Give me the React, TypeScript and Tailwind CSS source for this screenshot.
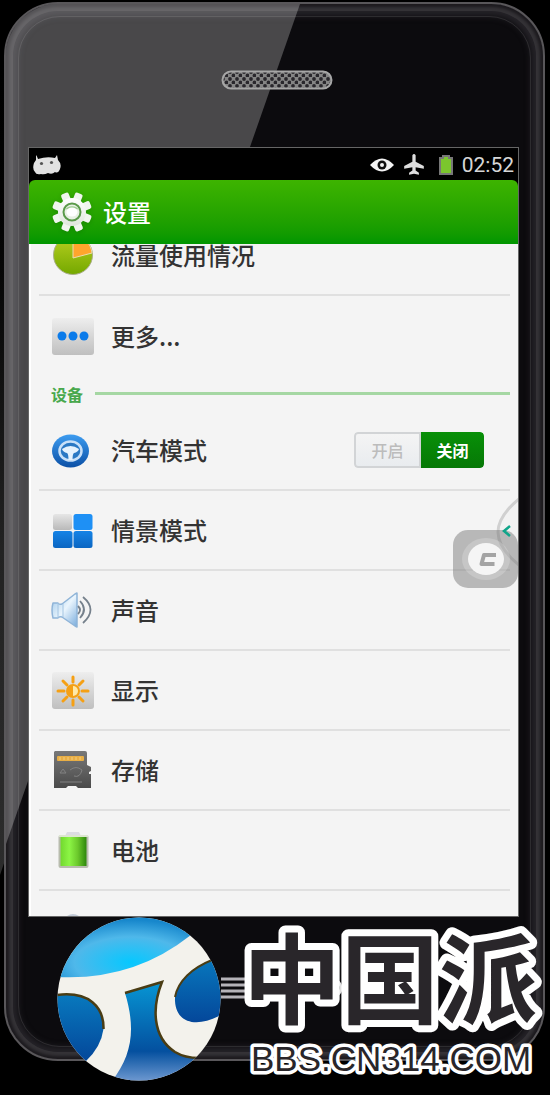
import { useState, type ReactNode } from 'react';

const svg = 'h-12 w-12 shrink-0';

function GearIcon() {
  const teeth = [0, 45, 90, 135, 180, 225, 270, 315];
  return (
    <svg viewBox="0 0 42 42" className="h-[42px] w-[42px] drop-shadow-sm" aria-hidden="true">
      <defs>
        <linearGradient id="gear" x1="0" y1="0" x2="0" y2="1">
          <stop offset="0" stopColor="#ffffff" />
          <stop offset="1" stopColor="#dfe6dc" />
        </linearGradient>
      </defs>
      <g fill="#f0f5ee" transform="rotate(22 21 21)">
        {teeth.map((a) => (
          <rect key={a} x="17" y="1" width="8" height="10" rx="2" transform={`rotate(${a} 21 21)`} />
        ))}
      </g>
      <circle cx="21" cy="21" r="14" fill="url(#gear)" />
      <circle cx="21" cy="21" r="8.500" fill="#e8f0e4" stroke="#5a9a4a" strokeWidth="2" />
      <path d="M14 19a7.500 6 0 0 1 14 0c-3-2-11-2-14 0Z" fill="#9ccb90" />
      <ellipse cx="21" cy="21" rx="5.500" ry="4.500" fill="#fff" />
    </svg>
  );
}

function PieIcon() {
  return (
    <svg viewBox="0 0 48 48" className={svg} aria-hidden="true">
      <defs>
        <linearGradient id="pie" x1="0" y1="0" x2="0" y2="1">
          <stop offset="0" stopColor="#b8d020" />
          <stop offset="1" stopColor="#74a800" />
        </linearGradient>
      </defs>
      <circle cx="24" cy="24" r="19.500" fill="url(#pie)" stroke="#a9ae8a" />
      <path d="M24 27V4a20 20 0 0 1 19 18Z" fill="#ffa52c" stroke="#e9dcae" strokeWidth="1" />
    </svg>
  );
}

function Plate({ children }: { children: ReactNode }) {
  return (
    <svg viewBox="0 0 48 48" className={svg} aria-hidden="true">
      <defs>
        <linearGradient id="plate" x1="0" y1="0" x2="0" y2="1">
          <stop offset="0" stopColor="#eeeeee" />
          <stop offset="1" stopColor="#bfbfbf" />
        </linearGradient>
      </defs>
      <rect x="3" y="6" width="42" height="37" rx="3" fill="url(#plate)" />
      {children}
    </svg>
  );
}

function MoreIcon() {
  return (
    <Plate>
      <g fill="#0b7bea">
        <circle cx="13" cy="24" r="4.500" />
        <circle cx="24" cy="24" r="4.500" />
        <circle cx="35" cy="24" r="4.500" />
      </g>
    </Plate>
  );
}

function CarIcon() {
  return (
    <svg viewBox="0 0 48 48" className={svg} aria-hidden="true">
      <defs>
        <linearGradient id="car" x1="0" y1="0" x2="0" y2="1">
          <stop offset="0" stopColor="#3d9cf0" />
          <stop offset="1" stopColor="#0b50a6" />
        </linearGradient>
      </defs>
      <ellipse cx="21.500" cy="25" rx="18.500" ry="16.500" fill="url(#car)" />
      <ellipse cx="21.500" cy="25" rx="11" ry="9.500" fill="#2a78c4" stroke="#c8e0f8" strokeWidth="2.500" />
      <path d="M13 23q8.500-6 17 0q-1 3-5 4q-1.500 1-1.500 7h-4q0-6-1.500-7q-4-1-5-4Z" fill="#e6f2fd" />
    </svg>
  );
}

function ProfileIcon() {
  return (
    <svg viewBox="0 0 48 48" className={svg} aria-hidden="true">
      <defs>
        <linearGradient id="tileA" x1="0" y1="0" x2="0" y2="1">
          <stop offset="0" stopColor="#e6e6e6" />
          <stop offset="1" stopColor="#b9b9b9" />
        </linearGradient>
        <linearGradient id="tileB" x1="0" y1="0" x2="0" y2="1">
          <stop offset="0" stopColor="#1583e6" />
          <stop offset="1" stopColor="#0b66c2" />
        </linearGradient>
      </defs>
      <rect x="4" y="8" width="19" height="16" rx="2.500" fill="url(#tileA)" />
      <rect x="24.500" y="8" width="19" height="16" rx="2.500" fill="#1e90f5" />
      <rect x="4" y="25" width="19.500" height="17" rx="2.500" fill="url(#tileB)" />
      <rect x="24.500" y="25" width="19" height="17" rx="2.500" fill="url(#tileB)" />
    </svg>
  );
}

function SoundIcon() {
  return (
    <svg viewBox="0 0 48 48" className={svg} aria-hidden="true">
      <defs>
        <linearGradient id="horn" x1="0" y1="0" x2="1" y2="1">
          <stop offset="0" stopColor="#9cc6e8" />
          <stop offset="0.500" stopColor="#eaf5fd" />
          <stop offset="1" stopColor="#78abdc" />
        </linearGradient>
      </defs>
      <path d="M4 17h5q1 2 4 1L26 8l2-1v34l-2-1L13 31q-3-1-4 1H4q-2-8 0-15Z" fill="url(#horn)" stroke="#8fb4d8" strokeWidth="1.500" strokeLinejoin="round" />
      <path d="M9 17v15M14 18v13" stroke="#a3c4e2" />
      <g fill="none" stroke="#76818c" strokeWidth="1.800">
        <path d="M29 20q4 4 0 8" />
        <path d="M31 15q8 8.500 0 17" />
        <path d="M34 11q15 12.500 0 26" />
      </g>
    </svg>
  );
}

function DisplayIcon() {
  return (
    <Plate>
      <g stroke="#f5a014" strokeWidth="3" strokeLinecap="round">
        <path d="M24 11v5M24 34v5M9 25h6M33 25h6M14 15l4 4M30 31l4 4M34 15l-4 4M18 31l-4 4" />
      </g>
      <circle cx="24" cy="25" r="7" fill="#f5a014" />
      <path d="M24 20a5 5 0 0 1 0 10Z" fill="#ffe9a8" />
    </Plate>
  );
}

function StorageIcon() {
  return (
    <svg viewBox="0 0 48 48" className={svg} aria-hidden="true">
      <defs>
        <linearGradient id="card" x1="0" y1="0" x2="0" y2="1">
          <stop offset="0" stopColor="#787878" />
          <stop offset="1" stopColor="#4a4a4a" />
        </linearGradient>
      </defs>
      <path d="M6 5h30q2 0 2 2v12l4 2v4l-2 1v2h2v14H29l-2-2h-8l-2 2H5V6Z" fill="url(#card)" />
      <rect x="8" y="10" width="27" height="5" rx="1" fill="#e8ae45" />
      <path d="M11 11v3M15 11v3M19 11v3M23 11v3M27 11v3M31 11v3" stroke="#f5cd7d" />
      <path d="M11 27l3-4l3 4ZM21 24q6-5 12 0q-2 8-8 6M11 36h22" fill="none" stroke="#828282" />
    </svg>
  );
}

function BatteryIcon() {
  return (
    <svg viewBox="0 0 48 48" className={svg} aria-hidden="true">
      <defs>
        <linearGradient id="cell">
          <stop offset="0" stopColor="#6fd52c" />
          <stop offset="0.350" stopColor="#8cf545" />
          <stop offset="0.650" stopColor="#6cc92c" />
          <stop offset="1" stopColor="#268008" />
        </linearGradient>
      </defs>
      <path d="M16 10l2-4h12l2 4Z" fill="#dcdce2" />
      <rect x="10.500" y="10" width="28" height="31" rx="1" fill="url(#cell)" stroke="#b8bcae" strokeWidth="2" />
      <path d="M10 10h29" stroke="#dce6d0" strokeWidth="2" />
    </svg>
  );
}

function StatusBar() {
  return (
    <div className="flex h-8 items-center bg-black pt-[2px] pr-1 pl-1">
      <svg viewBox="0 0 28 20" className="h-5 w-7" aria-label="Android" role="img">
        <path d="M3 0q1 1 2 4q9-3 17-1l2-3l1 5q4 4 2 9t-5 3q-3 3-7 1q-4 2-7 1q-5 1-6-2q-3-3-1-9l2-3Z" fill="#e2e2e2" />
        <circle cx="8.500" cy="8.500" r="1.600" fill="#555" />
        <circle cx="18.500" cy="7.500" r="1.600" fill="#555" />
      </svg>
      <div className="ml-auto flex items-center">
        <svg viewBox="0 0 24 16" className="h-4 w-6" aria-hidden="true">
          <path d="M0 8Q12-5 24 8Q12 21 0 8Z" fill="#f4f4f4" />
          <circle cx="12" cy="8" r="4.500" fill="#111" />
          <circle cx="12" cy="8" r="2" fill="#f4f4f4" />
        </svg>
        <svg viewBox="0 0 22 22" className="ml-2 h-6 w-6" aria-hidden="true">
          <path d="M9.500 2q1.500-2 3 0v6l7.500 4v2.500l-7.500-1.500v3l3 2v2l-4.500-1l-4.500 1v-2l3-2v-3l-7.500 1.500V12l7.500-4Z" fill="#dedede" />
        </svg>
        <svg viewBox="0 0 16 22" className="ml-3 h-6 w-4" aria-hidden="true">
          <path d="M5 4V2h6v2h3v16H2V4Z" fill="#7bc62d" stroke="#777" strokeWidth="2" />
        </svg>
        <time className="ml-2 font-[Roboto,sans-serif] text-[21px] leading-8 text-[#d6d6d6]">02:52</time>
      </div>
    </div>
  );
}

const rowText = 'flex w-full items-center gap-[14px] pl-[10px] text-left text-2xl font-medium';

function Row({ icon, label }: { icon: ReactNode; label: string }) {
  return (
    <li className="mx-2 border-b-2 border-[#e0e0e0]">
      <button type="button" className={`h-[78px] ${rowText}`}>
        {icon}
        <span>{label}</span>
      </button>
    </li>
  );
}

function CarRow() {
  const [on, setOn] = useState(false);
  const active = 'bg-linear-to-b from-[#089008] to-[#067806] text-white font-bold';
  const idle = 'bg-linear-to-b from-[#f4f4f4] to-[#e9ecef] text-[#bcbcbc] border-2 border-[#d2d4d6]';
  return (
    <li className="mx-2 border-b-2 border-[#e0e0e0]">
      <div className={`h-[78px] pr-[26px] ${rowText}`}>
        <CarIcon />
        <span>汽车模式</span>
        <div role="group" aria-label="汽车模式" className="ml-auto flex h-9 w-[130px] overflow-hidden rounded-sm text-base">
          <button type="button" aria-pressed={on} onClick={() => setOn(true)} className={`flex-1 rounded-l-sm leading-8 ${on ? active : idle}`}>
            开启
          </button>
          <button type="button" aria-pressed={!on} onClick={() => setOn(false)} className={`flex-1 rounded-r-sm leading-8 ${on ? idle : active}`}>
            关闭
          </button>
        </div>
      </div>
    </li>
  );
}

function Screen() {
  return (
    <main className="relative overflow-hidden border border-[#666] bg-black font-['Noto_Sans_CJK_SC',sans-serif] text-[#333]">
      <StatusBar />
      <header className="flex h-16 items-center gap-[10px] rounded-t-md bg-linear-to-b from-[#3db400] to-[#009600] pl-[22px] text-white">
        <GearIcon />
        <h1 className="text-2xl font-medium">设置</h1>
      </header>
      <div className="border-l-2 border-white bg-[#f4f4f4]">
        <ul className="flex h-[52px] flex-col justify-end overflow-hidden">
          <Row icon={<PieIcon />} label="流量使用情况" />
        </ul>
        <ul>
          <li className="mx-2">
            <button type="button" className={`h-20 ${rowText}`}>
              <MoreIcon />
              <span>更多...</span>
            </button>
          </li>
        </ul>
        <div className="mr-2 flex h-[35px] items-center gap-3 pl-5">
          <h2 className="text-base font-bold text-[#48a84c]">设备</h2>
          <div className="h-[3px] flex-1 bg-[#a5d7a3]" />
        </div>
        <ul>
          <CarRow />
          <Row icon={<ProfileIcon />} label="情景模式" />
          <Row icon={<SoundIcon />} label="声音" />
          <Row icon={<DisplayIcon />} label="显示" />
          <Row icon={<StorageIcon />} label="存储" />
          <Row icon={<BatteryIcon />} label="电池" />
        </ul>
        <div className="flex h-[25px] items-end pl-[30px]">
          <svg viewBox="0 0 24 4" className="h-1 w-6" aria-hidden="true">
            <path d="M6 4q6-4 12 0Z" fill="#c2cad6" />
          </svg>
        </div>
      </div>
      <button type="button" aria-label="展开侧栏" className="absolute top-[340px] right-0 h-[84px] w-6">
        <svg viewBox="0 0 24 84" className="h-full w-full">
          <path d="M26 10Q4 28 4 44t22 34Z" fill="#f2f2f2" stroke="#d0d0d0" strokeWidth="3" />
        </svg>
      </button>
      <button type="button" aria-label="悬浮助手" className="absolute top-[382px] right-0 h-[58px] w-[65px]">
        <svg viewBox="0 0 65 58" className="h-full w-full overflow-visible">
          <rect width="65" height="58" rx="15" fill="#777" fillOpacity="0.480" />
          <ellipse cx="33" cy="29" rx="24" ry="21" fill="#fff" fillOpacity="0.200" />
          <ellipse cx="33" cy="29" rx="18" ry="16" fill="#f5f5f5" />
          <path d="M43 25H31l-2.500 9h13" fill="none" stroke="#a4a4a4" strokeWidth="4" strokeLinejoin="round" />
          <path d="M57-4l-6 5l6 5" fill="none" stroke="#10a58a" strokeWidth="2.500" />
        </svg>
      </button>
    </main>
  );
}

function Speaker() {
  return (
    <svg viewBox="0 0 112 20" className="h-5 w-28" aria-hidden="true">
      <defs>
        <pattern id="mesh" width="7" height="7" patternUnits="userSpaceOnUse">
          <rect width="7" height="7" fill="#858585" />
          <circle cx="2" cy="2" r="1.900" fill="#29272c" />
          <circle cx="5.500" cy="5.500" r="1.900" fill="#29272c" />
        </pattern>
      </defs>
      <rect x="1.500" y="1.500" width="109" height="17" rx="8.500" fill="url(#mesh)" stroke="#a6a6a6" strokeWidth="2" />
    </svg>
  );
}

function Emblem() {
  return (
    <svg viewBox="0 0 164 164" className="h-[164px] w-[164px] shrink-0" role="img" aria-label="中国派">
      <defs>
        <clipPath id="disc">
          <circle cx="82" cy="82" r="81.500" />
        </clipPath>
        <radialGradient id="sky" cx="0.550" cy="0.750" r="0.700">
          <stop offset="0" stopColor="#06c8ff" />
          <stop offset="0.600" stopColor="#4fb8ea" />
          <stop offset="1" stopColor="#1787cc" />
        </radialGradient>
        <linearGradient id="sea" x1="0" y1="0" x2="0" y2="1">
          <stop offset="0" stopColor="#0796d4" />
          <stop offset="0.700" stopColor="#04509f" />
          <stop offset="1" stopColor="#6d98d0" />
        </linearGradient>
        <linearGradient id="side" x1="0" y1="0" x2="0" y2="1">
          <stop offset="0" stopColor="#0879be" />
          <stop offset="1" stopColor="#04479a" />
        </linearGradient>
      </defs>
      <g clipPath="url(#disc)">
        <rect width="164" height="164" fill="#f3f2ec" />
        <path d="M0 60Q76 64 134 18V0H0Z" fill="url(#sky)" />
        <path d="M0 78C32 74 47 90 46.500 112Q44 130 29 144H0Z" fill="url(#side)" />
        <path d="M0 78C32 74 47 90 46.500 112" fill="none" stroke="#4a3d14" strokeWidth="2.500" />
        <path d="M68 76L105 65C95 90 95 120 118 135Q128 141 142 141L120 164H55C75 138 79 112 68 76Z" fill="url(#sea)" />
        <path d="M68 76L105 65C95 90 95 120 118 135Q128 141 142 141" fill="none" stroke="#4a3d14" strokeWidth="2.500" />
        <path d="M164 40C135 48 117 68 118 84C119 105 138 112 164 98Z" fill="url(#side)" />
        <path d="M155 43C135 51 121 64 118 80" fill="none" stroke="#4a3d14" strokeWidth="2" />
      </g>
    </svg>
  );
}

function Wordmark() {
  return (
    <svg viewBox="0 0 316 164" className="h-[164px] w-[316px] shrink-0 overflow-visible" role="img" aria-label="中国派 BBS.CN314.COM">
      <path d="M0 62h46M0 68h46M0 74h46M0 80h46" stroke="#b5b3b8" strokeWidth="3" />
      <circle cx="112" cy="71" r="8" fill="none" stroke="#ddd" strokeWidth="3" />
      <g fill="#29262a" stroke="#fff" strokeLinejoin="round" textAnchor="middle" className="[paint-order:stroke_fill]">
        <text x="169" y="99" strokeWidth="14" className="font-['Noto_Sans_CJK_SC',sans-serif] text-[98px] font-bold">
          中国派
        </text>
        <text x="170" y="154" strokeWidth="7" className="font-['Liberation_Sans',sans-serif] text-[35px]">
          BBS.CN314.COM
        </text>
      </g>
    </svg>
  );
}

export default function App() {
  return (
    <div className="relative overflow-hidden bg-black pt-[2px] pr-[5px] pb-[35px] pl-1">
      <div className="absolute inset-0 bg-linear-to-b from-black via-[#222] to-[#333] [clip-path:polygon(0_60px,60px_60px,60px_700px,0_875px)]" />
      <div className="relative overflow-hidden rounded-[54px] border-2 border-[#59575a] bg-[#0c0b0e] pr-6 pb-[142px] pl-[22px] shadow-[inset_0_0_3px_3px_#1c1a1e,inset_0_0_0_7px_#343236,inset_0_0_6px_12px_#252328]">
        <div className="absolute inset-0 bg-white/25 [clip-path:polygon(0_0,294px_0,0_840px)]" />
        <div className="absolute inset-3 rounded-[42px] border border-white/10" />
        <div className="relative flex h-[143px] items-center justify-center pt-2 pl-[6px]">
          <Speaker />
        </div>
        <Screen />
      </div>
      <div className="absolute inset-x-0 bottom-[15px] flex justify-center pl-[44px]">
        <Emblem />
        <Wordmark />
      </div>
    </div>
  );
}
